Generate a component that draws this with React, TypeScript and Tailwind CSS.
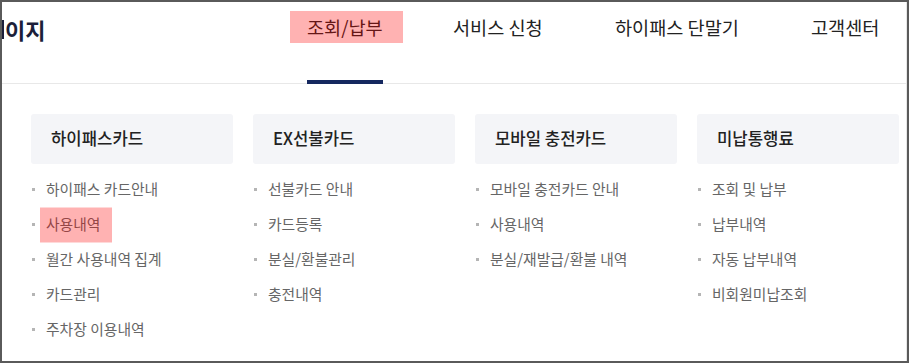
import React from 'react';

const columns = [
  { title: '하이패스카드', items: ['하이패스 카드안내', '사용내역', '월간 사용내역 집계', '카드관리', '주차장 이용내역'] },
  { title: 'EX선불카드', items: ['선불카드 안내', '카드등록', '분실/환불관리', '충전내역'] },
  { title: '모바일 충전카드', items: ['모바일 충전카드 안내', '사용내역', '분실/재발급/환불 내역'] },
  { title: '미납통행료', items: ['조회 및 납부', '납부내역', '자동 납부내역', '비회원미납조회'] },
];

const navItems = [
  { label: '조회/납부', w: 'w-[146px]', active: true },
  { label: '서비스 신청', w: 'w-[162px]', active: false },
  { label: '하이패스 단말기', w: 'w-[196px]', active: false },
  { label: '고객센터', w: 'w-[80px]', active: false },
];

const App: React.FC = () => {
  return (
    <div
      className="w-[909px] h-[363px] box-border border-2 border-[#5a5a5a] bg-white overflow-hidden"
      style={{ fontFamily: '"Noto Sans CJK KR", "Noto Sans", sans-serif' }}
    >
      <div className="h-full border-r border-[#e6e6e6] flex flex-col">
        {/* top bar */}
        <div className="h-[82px] shrink-0 flex border-b border-[#e8e8e8]">
          <div className="w-[305px] shrink-0 flex items-start pt-[11px]">
            {/* tail of the clipped title glyph */}
            <span className="w-[2px] h-[19px] mt-[7px] bg-[#1c1f3a] shrink-0" />
            <span className="ml-[1px] text-[22px] leading-[32px] font-bold text-[#1c1f3a] whitespace-nowrap">
              이지
            </span>
          </div>
          <nav className="flex">
            {navItems.map((item) => (
              <div key={item.label} className={`${item.w} shrink-0 relative`}>
                <span className="relative inline-block mt-[10px] text-[18.6px] leading-[30px] text-[#222] whitespace-nowrap">
                  {item.label}
                  {item.active && (
                    <>
                      <span className="absolute -left-[17px] -right-[20px] -top-[1px] -bottom-[1px] bg-[#ff00004d]" />
                      <span className="absolute left-0 right-0 top-[68px] h-[4px] bg-[#15285f]" />
                    </>
                  )}
                </span>
              </div>
            ))}
          </nav>
        </div>

        {/* dropdown */}
        <div className="pl-[29px] pt-[30px] grid grid-cols-[repeat(4,201.5px)] gap-x-[20.5px] items-start">
          {columns.map((col) => (
            <div key={col.title}>
              <div className="h-[50px] rounded-[3px] bg-[#f4f5f8] flex items-center pl-[20px] text-[16.7px] font-medium text-[#222]">
                {col.title}
              </div>
              <ul className="mt-[8px]">
                {col.items.map((it, i) => (
                  <li key={i} className="h-[35px] flex items-center">
                    <span className="w-[3px] h-[3px] bg-[#b5b5b5] ml-[1px] mr-[11px] shrink-0" />
                    <span className="relative text-[14.8px] text-[#666] whitespace-nowrap">
                      {it}
                      {col.title === '하이패스카드' && it === '사용내역' && (
                        <span className="absolute -left-[6px] -right-[12px] top-1/2 -translate-y-1/2 h-[35px] bg-[#ff00004d]" />
                      )}
                    </span>
                  </li>
                ))}
              </ul>
            </div>
          ))}
        </div>
      </div>
    </div>
  );
};

export default App;
